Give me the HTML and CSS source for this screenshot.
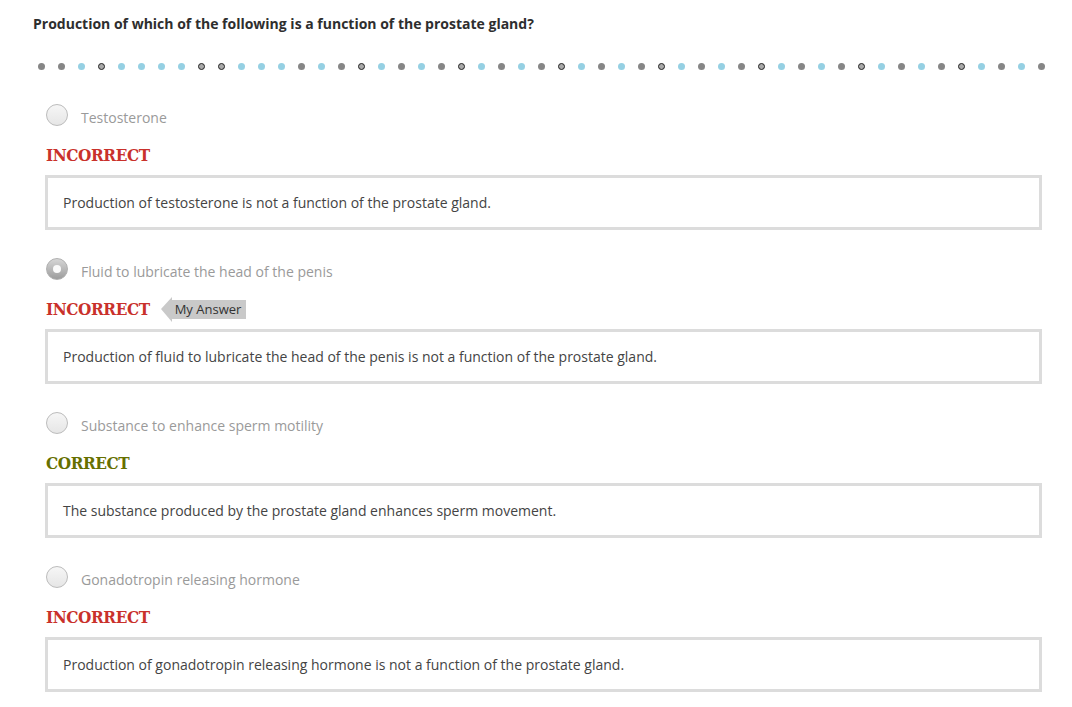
FILE: index.html
```html
<!DOCTYPE html>
<html lang="en">
<head>
  <meta charset="UTF-8" />
  <title>Quiz Review</title>
  <link rel="stylesheet" href="styles.css">
</head>
<body>
  <div class="quiz">
    <h2 class="question">Production of which of the following is a function of the prostate gland?</h2>

    <div class="dots">
      <span class="dot done"></span><span class="dot done"></span><span class="dot open"></span><span class="dot ring"></span>
      <span class="dot open"></span><span class="dot open"></span><span class="dot open"></span><span class="dot open"></span>
      <span class="dot ring"></span><span class="dot ring"></span><span class="dot open"></span><span class="dot open"></span>
      <span class="dot open"></span><span class="dot done"></span><span class="dot open"></span><span class="dot done"></span>
      <span class="dot ring"></span><span class="dot open"></span><span class="dot done"></span><span class="dot open"></span>
      <span class="dot done"></span><span class="dot ring"></span><span class="dot open"></span><span class="dot done"></span>
      <span class="dot open"></span><span class="dot done"></span><span class="dot ring"></span><span class="dot open"></span>
      <span class="dot done"></span><span class="dot open"></span><span class="dot done"></span><span class="dot ring"></span>
      <span class="dot open"></span><span class="dot done"></span><span class="dot open"></span><span class="dot done"></span>
      <span class="dot ring"></span><span class="dot open"></span><span class="dot done"></span><span class="dot open"></span>
      <span class="dot done"></span><span class="dot ring"></span><span class="dot open"></span><span class="dot done"></span>
      <span class="dot open"></span><span class="dot done"></span><span class="dot ring"></span><span class="dot open"></span>
      <span class="dot done"></span><span class="dot open"></span><span class="dot done"></span>
    </div>

    <div class="options">
      <div class="option">
        <div class="choice"><span class="radio"></span><span class="choice-text">Testosterone</span></div>
        <div class="result"><span class="verdict wrong">INCORRECT</span></div>
        <div class="feedback">Production of testosterone is not a function of the prostate gland.</div>
      </div>

      <div class="option">
        <div class="choice"><span class="radio checked"></span><span class="choice-text">Fluid to lubricate the head of the penis</span></div>
        <div class="result"><span class="verdict wrong">INCORRECT</span><span class="my-answer">My Answer</span></div>
        <div class="feedback">Production of fluid to lubricate the head of the penis is not a function of the prostate gland.</div>
      </div>

      <div class="option">
        <div class="choice"><span class="radio"></span><span class="choice-text">Substance to enhance sperm motility</span></div>
        <div class="result"><span class="verdict right">CORRECT</span></div>
        <div class="feedback">The substance produced by the prostate gland enhances sperm movement.</div>
      </div>

      <div class="option">
        <div class="choice"><span class="radio"></span><span class="choice-text">Gonadotropin releasing hormone</span></div>
        <div class="result"><span class="verdict wrong">INCORRECT</span></div>
        <div class="feedback">Production of gonadotropin releasing hormone is not a function of the prostate gland.</div>
      </div>
    </div>
  </div>
</body>
</html>
```

FILE: styles.css
```css
body {
  margin: 0;
  font-family: 'Open Sans', sans-serif;
  background-color: #ffffff;
  color: #444;
}

.quiz {
  padding: 15px 30px 0 33px;
}

.question {
  margin: 0;
  font-size: 14px;
  line-height: 18px;
  font-weight: bold;
  color: #2e2e2e;
}

.dots {
  display: flex;
  gap: 13px;
  margin: 30px 0 0 5px;
  align-items: center;
  height: 7px;
}

.dot {
  width: 7px;
  height: 7px;
  border-radius: 50%;
  box-sizing: border-box;
  flex-shrink: 0;
}

.dot.done {
  background-color: #868686;
}

.dot.open {
  background-color: #95d0e3;
}

.dot.ring {
  background-color: #a9a9a9;
  border: 1.5px solid #222;
}

.options {
  margin: 34px 0 0 12px;
}

.option {
  margin-bottom: 28px;
}

.choice {
  display: flex;
  align-items: flex-start;
  height: 25px;
}

.radio {
  width: 22px;
  height: 22px;
  margin-left: 1px;
  border-radius: 50%;
  border: 1px solid #bcbcbc;
  box-sizing: border-box;
  background: linear-gradient(#f6f6f6, #e6e6e6);
  display: flex;
  align-items: center;
  justify-content: center;
}

.radio.checked {
  border-color: #b0b0b0;
  background: linear-gradient(#d6d6d6, #9c9c9c);
}

.radio.checked::after {
  content: '';
  width: 8px;
  height: 8px;
  border-radius: 50%;
  background-color: #fafafa;
}

.choice-text {
  margin-left: 13px;
  padding-top: 3px;
  font-size: 14px;
  line-height: 22px;
  color: #9a9a9a;
}

.result {
  display: flex;
  align-items: center;
  margin-top: 14px;
  height: 24px;
}

.verdict {
  margin-left: 1px;
  font-family: 'DejaVu Serif Condensed', 'DejaVu Serif', serif;
  font-weight: bold;
  font-size: 17px;
  letter-spacing: -0.4px;
  line-height: 24px;
}

.verdict.wrong {
  color: #c9312b;
}

.verdict.right {
  color: #667000;
}

.my-answer {
  position: relative;
  margin-left: 22px;
  padding: 0 5px 0 3px;
  height: 19px;
  line-height: 19px;
  font-size: 13px;
  color: #333;
  background-color: #c9c9c9;
}

.my-answer::before {
  content: '';
  position: absolute;
  left: -11px;
  top: -3px;
  border-top: 12px solid transparent;
  border-bottom: 13px solid transparent;
  border-right: 11px solid #c9c9c9;
}

.feedback {
  margin-top: 8px;
  border: 3px solid #dcdcdc;
  padding: 16px 15px 15px;
  font-size: 14px;
  line-height: 18px;
  color: #444;
}
```
